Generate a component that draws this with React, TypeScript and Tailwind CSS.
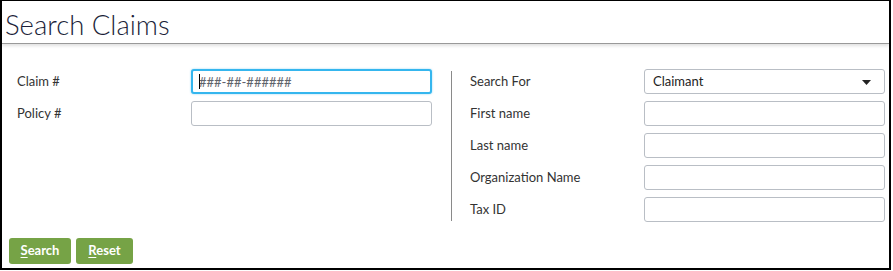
import { useState } from 'react';

const leftFields = ['Claim #', 'Policy #'];
const rightFields = ['First name', 'Last name', 'Organization Name', 'Tax ID'];

function Field({ label, children }: { label: string; children?: React.ReactNode }) {
  return (
    <div className="flex items-center h-[25px] mb-[7px]">
      <label className="w-[174px] shrink-0 text-[13px] text-[#333]">{label}</label>
      {children ?? (
        <input
          type="text"
          className="w-[241px] h-[25px] border border-[#b9bec5] rounded-[3px] bg-white px-2 text-[13px] outline-none"
        />
      )}
    </div>
  );
}

export default function App() {
  const [searchFor, setSearchFor] = useState('Claimant');

  return (
    <div
      className="w-[891px] h-[270px] bg-white border-black border-t border-x-2 border-b-2 flex flex-col"
      style={{ fontFamily: 'Lato, "Noto Sans", sans-serif' }}
    >
      {/* Header */}
      <div className="h-[43px] shrink-0 border-b border-[#999] shadow-[0_2px_3px_rgba(0,0,0,0.12)] flex items-end px-[3px] pb-[5px]">
        <h1 className="text-[27.5px] leading-none font-light text-[#1c1f3a]">Search Claims</h1>
      </div>

      {/* Form */}
      <div className="flex pt-[25px] flex-1">
        <div className="w-[449px] pl-[15px]">
          <Field label={leftFields[0]}>
            <div className="relative">
              <input
                type="text"
                placeholder="###-##-######"
                className="w-[241px] h-[25px] border-2 border-[#35b6ee] rounded-[3px] bg-white px-[6px] text-[13px] outline-none shadow-[0_0_2px_rgba(53,182,238,0.6)] placeholder:text-[#5f646b]"
              />
              <span className="absolute left-[8px] top-[5px] w-px h-[15px] bg-black" />
            </div>
          </Field>
          <Field label={leftFields[1]} />
        </div>

        <div className="w-px bg-[#8a8a8a] mt-[2px] h-[150px]" />

        <div className="pl-[18px]">
          <Field label="Search For">
            <div className="relative w-[241px] h-[25px] border border-[#b9bec5] rounded-[3px] bg-white flex items-center px-2">
              <span className="text-[13px] text-[#222]">{searchFor}</span>
              <select
                value={searchFor}
                onChange={(e) => setSearchFor(e.target.value)}
                className="absolute inset-0 opacity-0"
              >
                <option>Claimant</option>
                <option>Insured</option>
              </select>
              <svg className="absolute right-[13px] top-[10px]" width="9" height="5" viewBox="0 0 9 5">
                <path d="M0 0 H9 L4.5 5 Z" fill="#222" />
              </svg>
            </div>
          </Field>
          {rightFields.map((f) => (
            <Field key={f} label={f} />
          ))}
        </div>
      </div>

      {/* Buttons */}
      <div className="flex gap-[5px] pl-[7px] pb-[4px]">
        <button className="w-[62px] h-[26px] rounded-[3px] bg-[#76a346] text-white text-[13px] font-bold">
          <span className="underline underline-offset-2">S</span>earch
        </button>
        <button className="w-[57px] h-[26px] rounded-[3px] bg-[#76a346] text-white text-[13px] font-bold">
          <span className="underline underline-offset-2">R</span>eset
        </button>
      </div>
    </div>
  );
}
